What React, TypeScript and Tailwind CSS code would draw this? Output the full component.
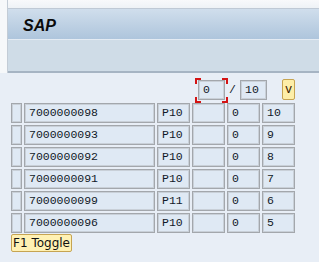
import React from "react";

const rows = [
  { id: "7000000098", p: "P10", a: "0", n: "10" },
  { id: "7000000093", p: "P10", a: "0", n: "9" },
  { id: "7000000092", p: "P10", a: "0", n: "8" },
  { id: "7000000091", p: "P10", a: "0", n: "7" },
  { id: "7000000099", p: "P11", a: "0", n: "6" },
  { id: "7000000096", p: "P10", a: "0", n: "5" },
];

const cell =
  "h-[20px] flex items-center pl-[4px] bg-[#dfe9f4] border border-[#a3a7ac] shadow-[inset_0_0_0_1px_#c9d0d8] text-[11.5px] text-[#111827] leading-none";

export default function App() {
  return (
    <div
      className="w-[319px] h-[262px] bg-[#e8eef6] overflow-hidden"
      style={{ fontFamily: '"Liberation Mono", monospace' }}
    >
      {/* top chrome */}
      <div className="flex bg-[#f6f8fa]">
        <div className="w-[7px] shrink-0" />
        <div className="flex-1 border-l border-[#c3ccd6]">
          <div className="h-[9px] bg-gradient-to-b from-[#f8f9fb] to-[#eef2f6] border-b border-[#bfc9d5]" />
          <div
            className="h-[31px] pl-[15px] pt-[5px] bg-gradient-to-b from-[#d0deec] to-[#aec5dc] border-b border-[#e4ebf3]"
            style={{ fontFamily: '"Liberation Sans", Arial, sans-serif' }}
          >
            <span className="text-[16px] leading-4 font-bold italic text-[#0b0b0b]">
              SAP
            </span>
          </div>
          <div className="h-[33px] bg-[#cfdce7] border-b-2 border-[#a6b4c3]" />
        </div>
      </div>

      {/* pager */}
      <div className="w-[295px] flex justify-end items-center mt-[7px] h-[20px]">
        <div className="relative">
          <div className={cell + " w-[27px]"}>0</div>
          <span className="absolute left-[-3px] top-[-2px] w-[6px] h-[6px] border-l-2 border-t-2 border-[#d41414]" />
          <span className="absolute right-[-3px] top-[-2px] w-[6px] h-[6px] border-r-2 border-t-2 border-[#d41414]" />
          <span className="absolute left-[-3px] bottom-[-3px] w-[6px] h-[6px] border-l-2 border-b-2 border-[#d41414]" />
          <span className="absolute right-[-3px] bottom-[-3px] w-[6px] h-[6px] border-r-2 border-b-2 border-[#d41414]" />
        </div>
        <span className="w-[15px] text-center text-[11.5px] text-[#111827]">/</span>
        <div className={cell + " w-[27px]"}>10</div>
        <div className="w-[15px]" />
        <div className="w-[13px] h-[21px] -mt-[1px] flex items-center justify-center bg-[#fdeea8] border border-[#c6a452] rounded-[2px] text-[12px] text-[#3a1a00]">
          v
        </div>
      </div>

      {/* table */}
      <div className="mt-[3px] pl-[11px] flex flex-col gap-[2px]">
        {rows.map((r) => (
          <div key={r.id} className="flex gap-[2px]">
            <div className={cell + " w-[11px]"} />
            <div className={cell + " w-[131px]"}>{r.id}</div>
            <div className={cell + " w-[33px]"}>{r.p}</div>
            <div className={cell + " w-[33px]"} />
            <div className={cell + " w-[33px]"}>{r.a}</div>
            <div className={cell + " w-[33px]"}>{r.n}</div>
          </div>
        ))}
      </div>

      <div className="pl-[11px] mt-[1px]">
        <div
          className="w-[61px] h-[18px] flex items-center justify-center bg-[#fff1b3] border border-[#c6a452] rounded-[2px] text-[12px] text-[#111]"
          style={{ fontFamily: '"DejaVu Sans", Verdana, sans-serif' }}
        >
          F1 Toggle
        </div>
      </div>
    </div>
  );
}
